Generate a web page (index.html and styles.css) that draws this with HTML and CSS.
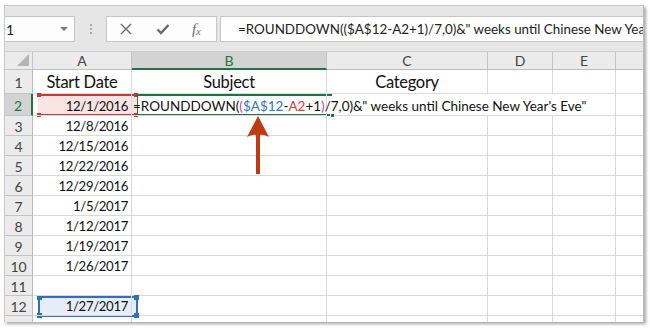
FILE: index.html
```html
<!DOCTYPE html>
<html>
<head>
<meta charset="utf-8">
<link rel="stylesheet" href="styles.css">
</head>
<body>
<div class="window">
  <div class="fbar">
    <div class="namebox"><span class="nb-text">M1</span><span class="nb-arrow"></span></div>
    <div class="grip"><i></i><i></i><i></i></div>
    <div class="fbtns">
      <svg class="ic-x" width="12" height="12" viewBox="0 0 12 12"><path d="M1 1L11 11M11 1L1 11" stroke="#6a6a6a" stroke-width="1.4" fill="none"/></svg>
      <svg class="ic-check" width="14" height="12" viewBox="0 0 14 12"><path d="M1.5 6.5L5 10L12.5 2" stroke="#6a6a6a" stroke-width="2.4" fill="none"/></svg>
      <span class="ic-fx">f<sub>x</sub></span>
    </div>
    <div class="finput">=ROUNDDOWN(($A$12-A2+1)/7,0)&amp;" weeks until Chinese New Year's Eve"</div>
  </div>
  <div class="sheet">
    <div class="grid">
      <div class="hd corner"><span class="tri"></span></div>
      <div class="hd col">A</div>
      <div class="hd col sel">B</div>
      <div class="hd col">C</div>
      <div class="hd col">D</div>
      <div class="hd col">E</div>
      <div class="hd col last"></div>

      <div class="hd row">1</div>
      <div class="c big">Start Date</div>
      <div class="c big">Subject</div>
      <div class="c big">Category</div>
      <div class="c"></div><div class="c"></div><div class="c last"></div>

      <div class="hd row rsel">2</div>
      <div class="c num">12/1/2016</div>
      <div class="c formula">=ROUNDDOWN(<span class="pk">(</span><span class="bl">$A$12</span>-<span class="rd">A2</span>+1<span class="pk">)</span>/7,0)&amp;" weeks until Chinese New Year's Eve"<span class="caret"></span></div>
      <div class="c nob"></div><div class="c nob"></div><div class="c"></div><div class="c last"></div>

      <div class="hd row">3</div><div class="c num">12/8/2016</div><div class="c"></div><div class="c"></div><div class="c"></div><div class="c"></div><div class="c last"></div>
      <div class="hd row">4</div><div class="c num">12/15/2016</div><div class="c"></div><div class="c"></div><div class="c"></div><div class="c"></div><div class="c last"></div>
      <div class="hd row">5</div><div class="c num">12/22/2016</div><div class="c"></div><div class="c"></div><div class="c"></div><div class="c"></div><div class="c last"></div>
      <div class="hd row">6</div><div class="c num">12/29/2016</div><div class="c"></div><div class="c"></div><div class="c"></div><div class="c"></div><div class="c last"></div>
      <div class="hd row">7</div><div class="c num">1/5/2017</div><div class="c"></div><div class="c"></div><div class="c"></div><div class="c"></div><div class="c last"></div>
      <div class="hd row">8</div><div class="c num">1/12/2017</div><div class="c"></div><div class="c"></div><div class="c"></div><div class="c"></div><div class="c last"></div>
      <div class="hd row">9</div><div class="c num">1/19/2017</div><div class="c"></div><div class="c"></div><div class="c"></div><div class="c"></div><div class="c last"></div>
      <div class="hd row">10</div><div class="c num">1/26/2017</div><div class="c"></div><div class="c"></div><div class="c"></div><div class="c"></div><div class="c last"></div>
      <div class="hd row">11</div><div class="c num"></div><div class="c"></div><div class="c"></div><div class="c"></div><div class="c"></div><div class="c last"></div>
      <div class="hd row">12</div><div class="c num">1/27/2017</div><div class="c"></div><div class="c"></div><div class="c"></div><div class="c"></div><div class="c last"></div>
      <div class="hd row">13</div><div class="c"></div><div class="c"></div><div class="c"></div><div class="c"></div><div class="c"></div><div class="c last"></div>
    </div>

    <div class="ref-red"><i class="h tl"></i><i class="h tr"></i><i class="h bl"></i><i class="h br"></i></div>
    <div class="ref-blue"><i class="h tl"></i><i class="h tr"></i><i class="h bl"></i><i class="h br"></i></div>
    <div class="active"><i class="fill"></i></div>
    <svg class="arrow" width="26" height="60" viewBox="0 0 26 60">
      <path d="M13 0 L24 21 Q18 18 15 19 L15 58 L11 58 L11 19 Q8 18 2 21 Z" fill="#bd3a12"/>
    </svg>
  </div>
</div>
</body>
</html>
```

FILE: styles.css
```css
* { box-sizing: border-box; }
html, body { margin: 0; padding: 0; background: #ffffff; }
body { width: 650px; height: 328px; overflow: hidden; }

.window {
  margin: 5px 0 0 4px;
  width: 640px;
  height: 317px;
  border-top: 1px solid #c9c9c9;
  border-left: 1px solid #c9c9c9;
  border-right: 1px solid #bdbdbd;
  background: #fff;
  overflow: hidden;
  box-shadow: 2px 2px 3px rgba(0,0,0,0.35);
  font-family: Lato, "Liberation Sans", sans-serif;
}

/* formula bar */
.fbar {
  height: 46px;
  background: #e6e6e6;
  display: flex;
  align-items: flex-start;
  padding-top: 10px;
  border-bottom: 1px solid #d0d0d0;
}
.namebox {
  width: 71px;
  height: 26px;
  margin-left: -1px;
  background: #fdfdfd;
  border: 1px solid #c6c6c6;
  border-left: none;
  display: flex;
  align-items: center;
  overflow: hidden;
  position: relative;
}
.nb-text {
  font-size: 14px;
  color: #222;
  margin-left: -11px;
}
.nb-arrow {
  margin-left: auto;
  margin-right: 6px;
  width: 0; height: 0;
  border-left: 4px solid transparent;
  border-right: 4px solid transparent;
  border-top: 4px solid #7a7a7a;
}
.grip {
  width: 31px;
  height: 26px;
  display: flex;
  flex-direction: column;
  align-items: center;
  justify-content: center;
  gap: 2px;
}
.grip i { display: block; width: 2px; height: 2px; background: #a9a9a9; }
.fbtns {
  width: 111px;
  height: 26px;
  background: #fdfdfd;
  border: 1px solid #c6c6c6;
  display: flex;
  align-items: center;
  position: relative;
}
.ic-x { margin-left: 13px; }
.ic-check { margin-left: 24px; }
.ic-fx {
  margin-left: 22px;
  font-family: "Liberation Serif", serif;
  font-style: italic;
  font-size: 15px;
  color: #6a6a6a;
  line-height: 1;
}
.ic-fx sub { font-size: 10px; vertical-align: -1px; }
.finput {
  margin-left: 3px;
  flex: 1;
  height: 26px;
  background: #fff;
  border: 1px solid #c6c6c6;
  border-right: none;
  padding-left: 17px;
  font-size: 13.4px;
  line-height: 24px;
  color: #222;
  white-space: nowrap;
  overflow: hidden;
}

/* sheet */
.sheet { position: relative; }
.grid {
  display: grid;
  grid-template-columns: 28px 99px 195px 161px 65px 63px 28px;
  grid-template-rows: 18px 24px 22px repeat(11, 20px);
}
.hd {
  background: #ebebeb;
  color: #444;
  font-size: 14px;
  display: flex;
  align-items: center;
  justify-content: center;
  border-right: 1px solid #c4c4c4;
  border-bottom: 1px solid #c4c4c4;
}
.hd.col { border-bottom: 1px solid #bdbdbd; }
.hd.col.last { border-right: none; }
.hd.sel { background: #d3d3d3; color: #217346; border-bottom: 2px solid #217346; }
.hd.row { border-right: 1px solid #bdbdbd; padding-top: 2px; }
.hd.rsel { background: #d3d3d3; color: #217346; border-right: 2px solid #217346; }
.corner { position: relative; }
.tri {
  position: absolute;
  right: 3px; bottom: 3px;
  width: 0; height: 0;
  border-left: 12px solid transparent;
  border-bottom: 12px solid #b5b5b5;
}
.c {
  border-right: 1px solid #d9d9d9;
  border-bottom: 1px solid #d9d9d9;
  font-size: 13.5px;
  color: #111;
  display: flex;
  align-items: flex-end;
  padding-bottom: 1px;
  white-space: nowrap;
}
.c.last { border-right: none; }
.c.nob { border-right-color: transparent; }
.c.big { font-size: 16.5px; letter-spacing: -0.3px; justify-content: center; padding-bottom: 1px; }
.c.num { justify-content: flex-end; padding-right: 3px; font-size: 13.2px; letter-spacing: -0.35px; }
.c.formula {
  overflow: visible;
  position: relative;
  z-index: 2;
  padding-left: 1px;
}
.pk { color: #c2449b; }
.bl { color: #2f74d0; }
.rd { color: #d23c3c; }
.caret {
  display: inline-block;
  width: 1px;
  height: 17px;
  background: #000;
  margin-left: 1px;
  align-self: center;
}

/* overlays */
.ref-red {
  position: absolute;
  left: 33px; top: 42px;
  width: 99px; height: 22px;
  background: #f9e3e3;
  border-top: 2px solid #c23b3b;
  border-bottom: 2px solid #c23b3b;
  z-index: 1;
}
.ref-red .h { background: #c23b3b; }
.ref-blue {
  position: absolute;
  left: 33px; top: 244px;
  width: 100px; height: 21px;
  background: #e6edf8;
  border: 2px solid #2e6fc0;
  z-index: 1;
}
.ref-blue .h { background: #2e6fc0; }
.h { position: absolute; width: 5px; height: 5px; display: block; }
.h.tl { left: -3px; top: -3px; }
.h.tr { right: -3px; top: -3px; }
.h.bl { left: -3px; bottom: -3px; }
.h.br { right: -3px; bottom: -3px; }
.ref-red .h { width: 4px; height: 4px; }
.ref-red .h.tl, .ref-red .h.bl { left: -1px; }
.ref-red .h.tr, .ref-red .h.br { right: -1px; }

.num { position: relative; z-index: 2; }

.active {
  position: absolute;
  left: 132px; top: 42px;
  width: 195px; height: 22px;
  border-top: 2px solid #217346;
  border-bottom: 2px solid #217346;
  border-left: 1px solid #217346;
  z-index: 1;
}
.fill {
  position: absolute;
  right: -3px; bottom: -4px;
  width: 5px; height: 5px;
  background: #217346;
  border: 1px solid #fff;
}
.arrow {
  position: absolute;
  left: 240px; top: 64px;
  z-index: 3;
}
```
